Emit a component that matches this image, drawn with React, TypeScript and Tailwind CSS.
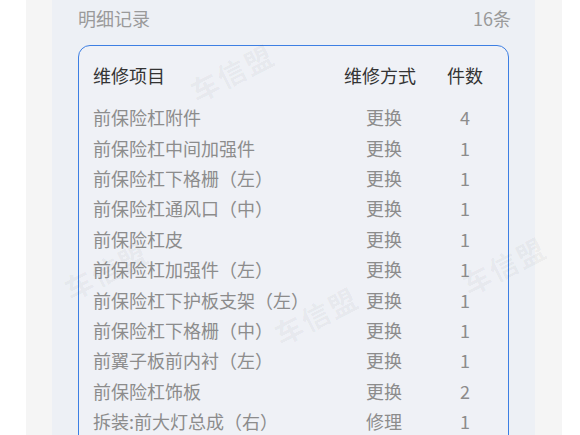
import React from "react";

const rows: [string, string, number][] = [
  ["前保险杠附件", "更换", 4],
  ["前保险杠中间加强件", "更换", 1],
  ["前保险杠下格栅（左）", "更换", 1],
  ["前保险杠通风口（中）", "更换", 1],
  ["前保险杠皮", "更换", 1],
  ["前保险杠加强件（左）", "更换", 1],
  ["前保险杠下护板支架（左）", "更换", 1],
  ["前保险杠下格栅（中）", "更换", 1],
  ["前翼子板前内衬（左）", "更换", 1],
  ["前保险杠饰板", "更换", 2],
  ["拆装:前大灯总成（右）", "修理", 1],
];

// watermark centres, page coordinates
const marks = [
  [232, 72],
  [106, 270],
  [316, 315],
  [504, 265],
];

export default function App() {
  return (
    <div
      className="relative h-[435px] w-[580px] overflow-hidden bg-white pl-[26px] pr-[18px]"
      style={{ fontFamily: '"Noto Sans CJK SC", "Noto Sans", sans-serif' }}
    >
      <div className="h-full bg-[#f5f5f5] pl-[26px] pr-[27px]">
        <div className="h-full bg-[#edf0f5] px-[26px] pt-[6px]">
          {/* title */}
          <div className="flex h-[24px] items-center justify-between text-[18px] leading-[24px] text-[#9a9a9a]">
            <span>明细记录</span>
            <span className="-mr-[2px]">16条</span>
          </div>

          {/* table */}
          <div className="mt-[15px] h-[420px] rounded-[12px] border border-[#3d7fe3] bg-[#eff1f6] pt-[14px]">
            <div className="grid h-[30px] grid-cols-[1fr_101px_40px] items-center pl-[14px] pr-[23px] text-[18px] text-[#333]">
              <span>维修项目</span>
              <span>维修方式</span>
              <span className="text-center">件数</span>
            </div>
            <div className="mt-[12px]">
              {rows.map(([name, way, n], i) => (
                <div
                  key={i}
                  className="grid h-[30.4px] grid-cols-[1fr_101px_40px] items-center pl-[14px] pr-[23px] text-[18px] leading-[24px] text-[#8c8c8c]"
                >
                  <span className="whitespace-nowrap">{name}</span>
                  <span className="pl-[22px]">{way}</span>
                  <span className="text-center">{n}</span>
                </div>
              ))}
            </div>
          </div>
        </div>
      </div>

      {marks.map(([x, y], i) => (
        <div
          key={i}
          className="pointer-events-none absolute -translate-x-1/2 -translate-y-1/2 -rotate-[27deg] whitespace-nowrap text-[28px] font-bold tracking-[2px] text-black/[0.045]"
          style={{ left: x, top: y }}
        >
          车信盟
        </div>
      ))}
    </div>
  );
}
